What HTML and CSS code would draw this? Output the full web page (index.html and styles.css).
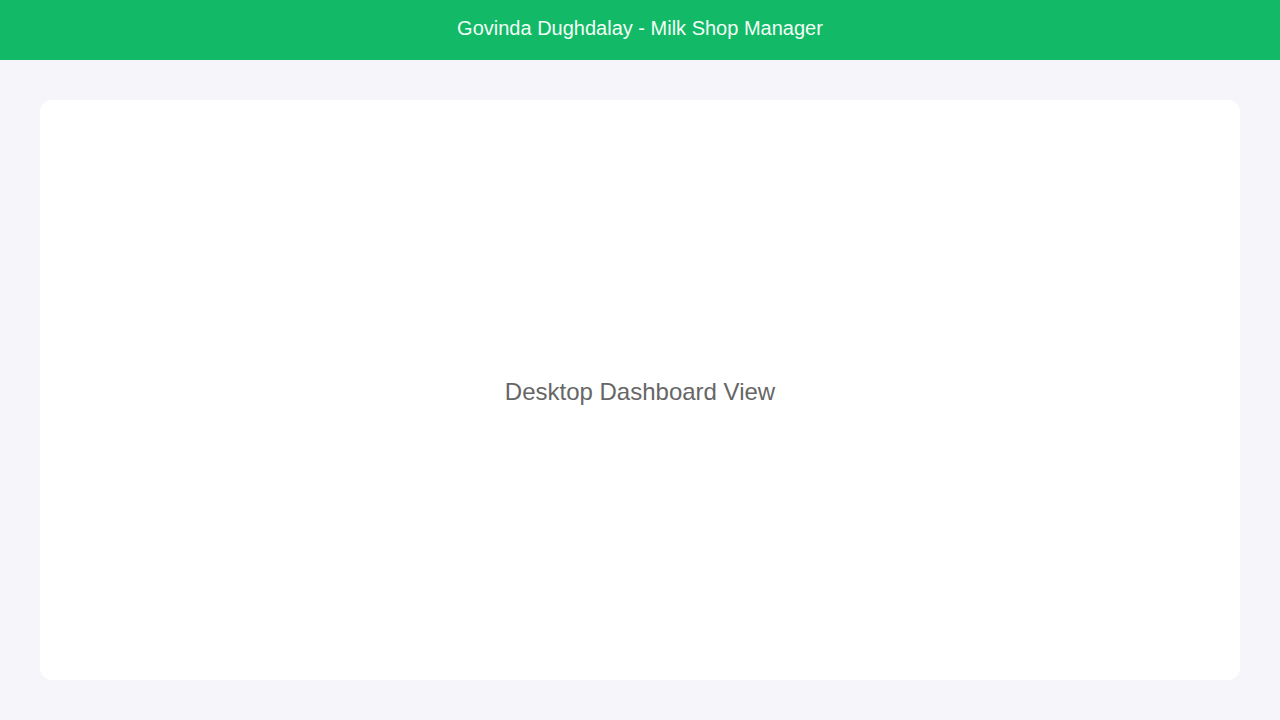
FILE: index.html
```html
<!DOCTYPE html>
<html lang="en">
<head>
<meta charset="utf-8">
<title>Govinda Dughdalay - Milk Shop Manager</title>
<link rel="stylesheet" href="styles.css">
</head>
<body>
<header class="app-header">Govinda Dughdalay - Milk Shop Manager</header>
<main class="app-main">
  <section class="dashboard-card">
    <p class="dashboard-label">Desktop Dashboard View</p>
  </section>
</main>
</body>
</html>
```
FILE: styles.css
```css
* { box-sizing: border-box; }
html, body {
  margin: 0;
  padding: 0;
  height: 100%;
}
body {
  background: #f5f5fa;
  font-family: "Liberation Sans", Arial, sans-serif;
  display: flex;
  flex-direction: column;
}
.app-header {
  height: 60px;
  flex: none;
  background: #12b967;
  color: #f2fff7;
  font-size: 20px;
  display: flex;
  align-items: center;
  justify-content: center;
  padding-bottom: 4px;
}
.app-main {
  flex: 1;
  padding: 40px;
  display: flex;
}
.dashboard-card {
  flex: 1;
  background: #ffffff;
  border-radius: 12px;
  display: flex;
  align-items: center;
  justify-content: center;
  padding-top: 4px;
}
.dashboard-label {
  margin: 0;
  font-size: 24px;
  color: #666666;
}
```
